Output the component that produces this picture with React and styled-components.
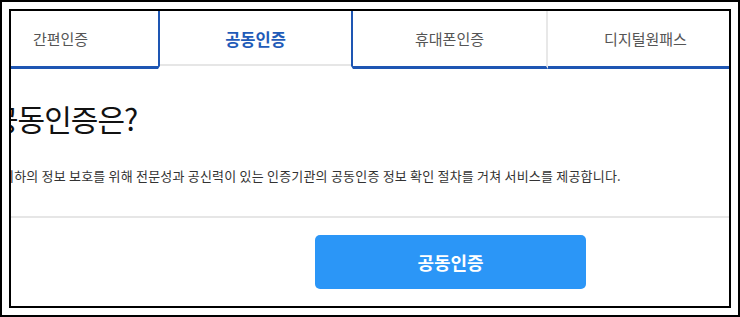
import React from 'react';
import styled, { createGlobalStyle } from 'styled-components';

const GlobalStyle = createGlobalStyle`
  body {
    margin: 0;
    background: #fff;
    font-family: "Noto Sans CJK KR", "Noto Sans", sans-serif;
  }
`;

const BLUE = '#1e56b3';

const Frame = styled.div`
  width: 740px;
  height: 317px;
  box-sizing: border-box;
  border: 2px solid #000;
  padding: 7px;
  background: #fff;
`;

const Panel = styled.div`
  height: 100%;
  box-sizing: border-box;
  border: 2px solid #000;
  overflow: hidden;
`;

const Strip = styled.div`
  width: 785px;
  margin-left: -48px;
  display: flex;
  flex-direction: column;
`;

const TabBar = styled.div`
  display: flex;
  height: 58px;
`;

const Tab = styled.div`
  flex: 0 0 195px;
  box-sizing: border-box;
  display: flex;
  align-items: center;
  justify-content: center;
  font-size: ${p => (p.$active ? '16.5px' : '15px')};
  font-weight: ${p => (p.$active ? 600 : 400)};
  color: ${p => (p.$active ? '#1f5bb8' : '#555')};
  border-bottom: 3px solid ${p => (p.$active ? 'transparent' : BLUE)};
  border-left: ${p => (p.$active ? `2px solid ${BLUE}` : 'none')};
  border-right: ${p => (p.$active ? `2px solid ${BLUE}` : p.$sep ? '2px solid #e8e8e8' : 'none')};
  box-shadow: ${p => (p.$active ? 'inset 0 -2px 0 #e6e6e6' : 'none')};
`;

const Body = styled.div`
  display: flex;
  flex-direction: column;
  padding-top: 32px;
`;

const Heading = styled.h2`
  margin: 0 0 30px 28px;
  font-size: 30px;
  line-height: 35px;
  font-weight: 400;
  letter-spacing: -1px;
  color: #111;
`;

const Lead = styled.p`
  margin: 0 0 30px 39px;
  font-size: 13px;
  line-height: 20px;
  letter-spacing: 0.2px;
  color: #333;
`;

const Divider = styled.hr`
  margin: 0;
  border: none;
  height: 2px;
  background: #e6e6e6;
`;

const Footer = styled.div`
  display: flex;
  padding: 17px 0 18px 352px;
`;

const PrimaryButton = styled.button`
  width: 271px;
  height: 54px;
  border: none;
  border-radius: 5px;
  background: #2b96f7;
  color: #fff;
  font-family: inherit;
  font-size: 18px;
  font-weight: 700;
  cursor: pointer;
`;

const tabs = [
  { label: '간편인증' },
  { label: '공동인증', active: true },
  { label: '휴대폰인증', sep: true },
  { label: '디지털원패스' },
];

const App = () => {
  return (
    <>
      <GlobalStyle />
      <Frame>
        <Panel>
          <Strip>
            <TabBar>
              {tabs.map(t => (
                <Tab key={t.label} $active={t.active} $sep={t.sep}>
                  {t.label}
                </Tab>
              ))}
            </TabBar>
            <Body>
              <Heading>공동인증은?</Heading>
              <Lead>
                귀하의 정보 보호를 위해 전문성과 공신력이 있는 인증기관의 공동인증 정보 확인 절차를 거쳐 서비스를 제공합니다.
              </Lead>
              <Divider />
              <Footer>
                <PrimaryButton>공동인증</PrimaryButton>
              </Footer>
            </Body>
          </Strip>
        </Panel>
      </Frame>
    </>
  );
};

export default App;
